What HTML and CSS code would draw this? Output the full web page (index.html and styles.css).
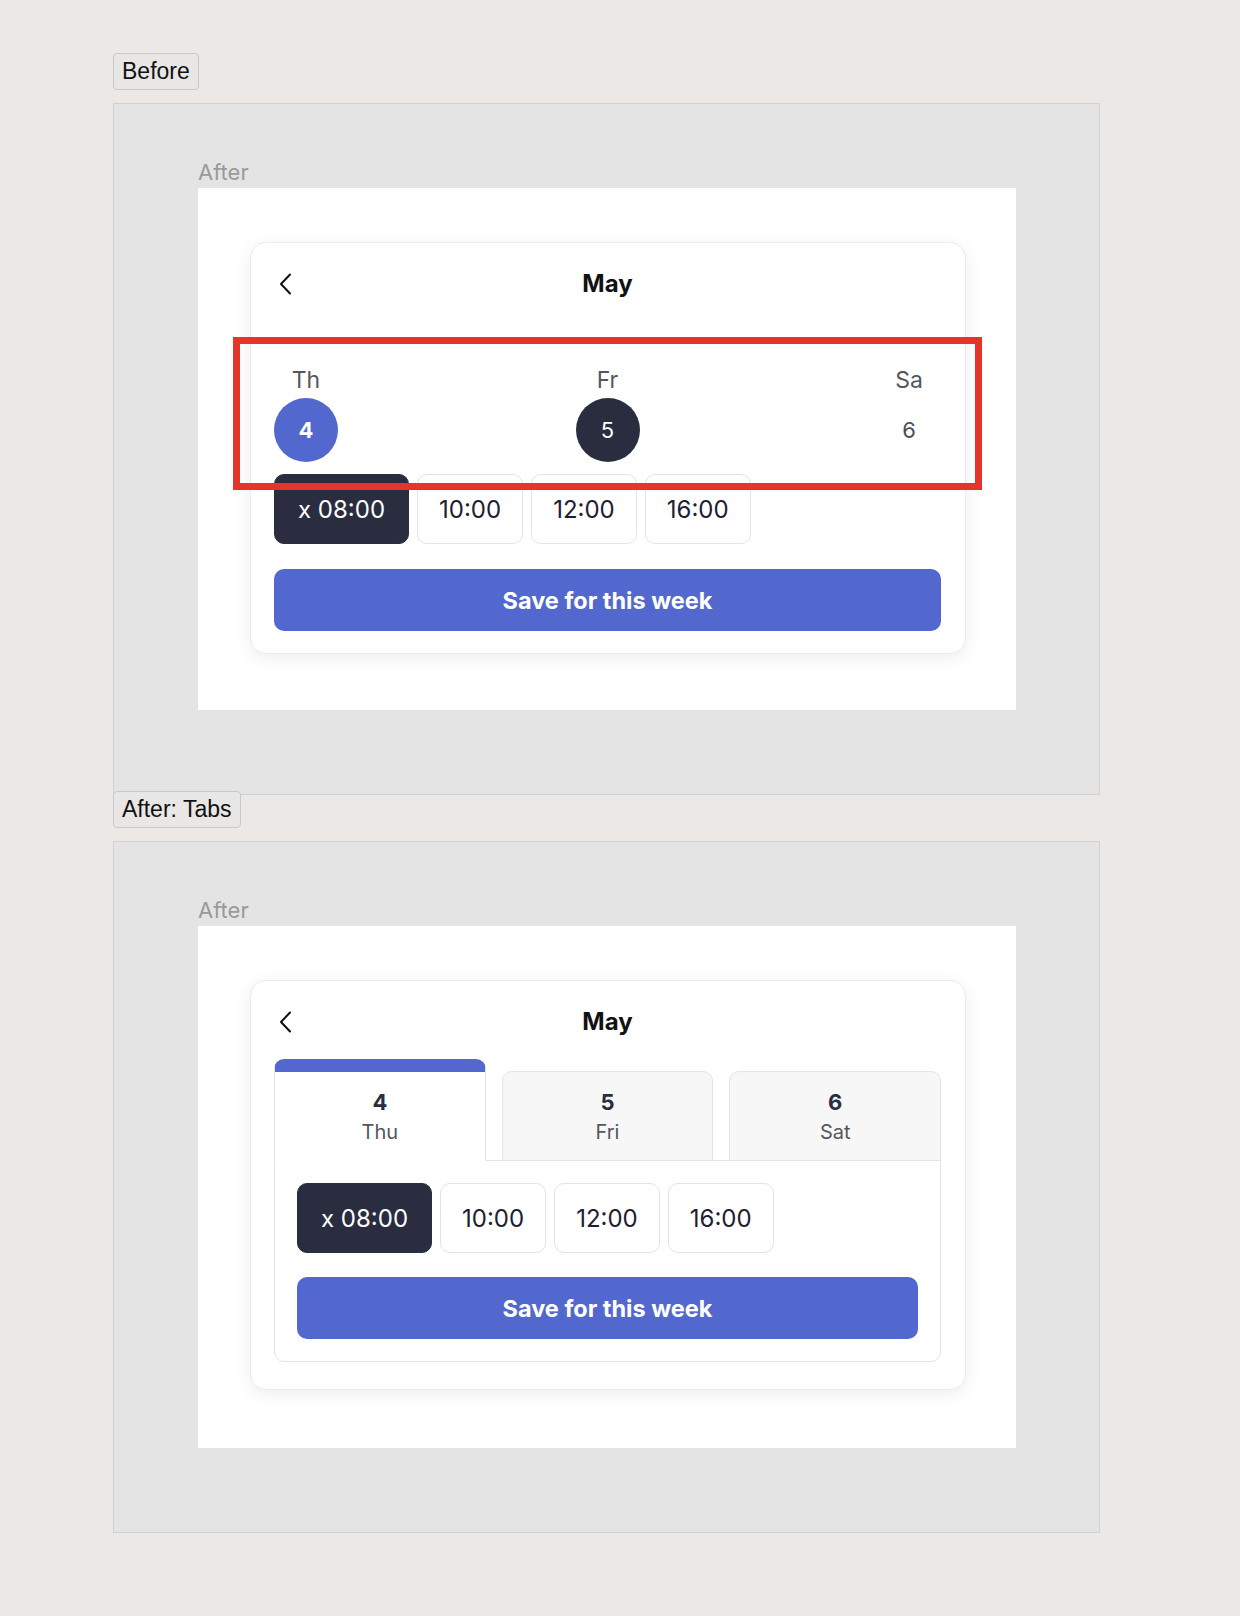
FILE: index.html
```html
<!DOCTYPE html>
<html lang="en">
<head>
<meta charset="utf-8">
<title>Day picker – Before / After</title>
<link rel="stylesheet" href="styles.css">
</head>
<body>
  <button class="variant-label">Before</button>
  <section class="variant">
    <div class="frame-label">After</div>
    <div class="stage">
      <div class="card">
        <div class="card-header">
          <button class="back" aria-label="Previous">
            <svg width="14" height="22" viewBox="0 0 14 22"><polyline points="11,1.5 2,11 11,20.5" fill="none" stroke="#111" stroke-width="2" stroke-linecap="round" stroke-linejoin="round"/></svg>
          </button>
          <h2 class="month">May</h2>
        </div>
        <div class="day-strip">
          <div class="day">
            <span class="day-name">Th</span>
            <span class="day-num is-today">4</span>
          </div>
          <div class="day">
            <span class="day-name">Fr</span>
            <span class="day-num is-selected">5</span>
          </div>
          <div class="day">
            <span class="day-name">Sa</span>
            <span class="day-num">6</span>
          </div>
          <div class="highlight"></div>
        </div>
        <div class="times">
          <button class="chip chip-active">x 08:00</button>
          <button class="chip">10:00</button>
          <button class="chip">12:00</button>
          <button class="chip">16:00</button>
        </div>
        <button class="save">Save for this week</button>
      </div>
    </div>
  </section>

  <button class="variant-label variant-label-second">After: Tabs</button>
  <section class="variant">
    <div class="frame-label">After</div>
    <div class="stage">
      <div class="card card-tabs">
        <div class="card-header">
          <button class="back" aria-label="Previous">
            <svg width="14" height="22" viewBox="0 0 14 22"><polyline points="11,1.5 2,11 11,20.5" fill="none" stroke="#111" stroke-width="2" stroke-linecap="round" stroke-linejoin="round"/></svg>
          </button>
          <h2 class="month">May</h2>
        </div>
        <div class="tabs">
          <div class="tab tab-active">
            <span class="tab-num">4</span>
            <span class="tab-name">Thu</span>
          </div>
          <div class="tab">
            <span class="tab-num">5</span>
            <span class="tab-name">Fri</span>
          </div>
          <div class="tab">
            <span class="tab-num">6</span>
            <span class="tab-name">Sat</span>
          </div>
        </div>
        <div class="tab-panel">
          <div class="times">
            <button class="chip chip-active">x 08:00</button>
            <button class="chip">10:00</button>
            <button class="chip">12:00</button>
            <button class="chip">16:00</button>
          </div>
          <button class="save">Save for this week</button>
        </div>
      </div>
    </div>
  </section>
</body>
</html>
```

FILE: styles.css
```css
* { box-sizing: border-box; }

body {
  margin: 0;
  padding: 53px 0 60px 113px;
  background: #ebe8e6;
  font-family: Inter, "Noto Sans", sans-serif;
  color: #23263a;
}

button {
  font-family: inherit;
  cursor: pointer;
}

.variant-label {
  display: block;
  height: 37px;
  margin: 0 0 13px;
  padding: 0 8px;
  font-family: "Liberation Sans", Arial, sans-serif;
  font-size: 23px;
  line-height: 35px;
  color: #111;
  background: #e9e7e5;
  border: 1px solid #c9c9c9;
  border-radius: 4px;
}

.variant-label-second {
  position: relative;
  margin-top: -4px;
}

.variant {
  width: 987px;
  padding: 54px 83px 84px 84px;
  background: #e4e4e4;
  border: 1px solid #d2d2d2;
}

.frame-label {
  font-size: 22px;
  line-height: 28px;
  color: #9a9a9a;
  margin-bottom: 2px;
}

.stage {
  height: 522px;
  padding: 54px 51px 0 52px;
  background: #fff;
}

.card {
  width: 716px;
  padding: 23px 24px 22px 23px;
  background: #fff;
  border: 1px solid #ebebeb;
  border-radius: 16px;
  box-shadow: 0 4px 18px rgba(0, 0, 0, 0.07);
}

.card-tabs {
  padding-bottom: 27px;
}

.card-header {
  position: relative;
  height: 36px;
  display: flex;
  align-items: center;
  justify-content: center;
}

.back {
  position: absolute;
  left: 5px;
  top: 7px;
  width: 14px;
  height: 22px;
  padding: 0;
  border: 0;
  background: none;
  display: flex;
}

.month {
  margin: 0;
  font-size: 24px;
  line-height: 36px;
  font-weight: 700;
  color: #111;
}

.day-strip {
  position: relative;
  margin-top: 64px;
  display: flex;
  justify-content: space-between;
}

.day {
  width: 64px;
  display: flex;
  flex-direction: column;
  align-items: center;
}

.day-name {
  font-size: 23px;
  line-height: 28px;
  color: #55575f;
}

.day-num {
  margin-top: 4px;
  width: 64px;
  height: 64px;
  border-radius: 50%;
  display: flex;
  align-items: center;
  justify-content: center;
  font-size: 22px;
  color: #4a4c55;
}

.day-num.is-today {
  background: #5368cf;
  color: #fff;
  font-weight: 700;
}

.day-num.is-selected {
  background: #292d3f;
  color: #fff;
}

.highlight {
  position: absolute;
  top: -29px;
  left: -41px;
  right: -41px;
  bottom: -28px;
  border: 7px solid #e5352b;
  pointer-events: none;
}

.times {
  margin-top: 12px;
  display: flex;
  gap: 8px;
}

.chip {
  height: 70px;
  padding: 0 21px;
  font-size: 24px;
  color: #1d2032;
  background: #fff;
  border: 1px solid #e4e4e4;
  border-radius: 10px;
}

.chip-active {
  padding: 0 23px;
  background: #292d3f;
  border-color: #292d3f;
  color: #fff;
}

.save {
  display: block;
  width: 100%;
  height: 62px;
  margin-top: 25px;
  font-size: 23.5px;
  font-weight: 700;
  color: #fff;
  background: #5368cf;
  border: 0;
  border-radius: 10px;
}

/* Tabs variant */
.tabs {
  position: relative;
  z-index: 1;
  margin-top: 19px;
  margin-bottom: -1px;
  display: flex;
  align-items: flex-end;
  gap: 16px;
}

.tab {
  flex: 1;
  display: flex;
  flex-direction: column;
  align-items: center;
  padding: 16px 0 12px;
  background: #f7f7f7;
  border: 1px solid #e4e4e4;
  border-radius: 10px 10px 0 0;
}

.tab-active {
  background: #fff;
  border-top: 13px solid #5368cf;
  border-bottom-color: #fff;
}

.tab-num {
  font-size: 22px;
  line-height: 28px;
  font-weight: 700;
  color: #292d3f;
}

.tab-name {
  font-size: 20px;
  line-height: 32px;
  color: #55575f;
}

.tab-panel {
  padding: 22px 22px 22px;
  border: 1px solid #e4e4e4;
  border-radius: 0 0 10px 10px;
}

.tab-panel .times {
  margin-top: 0;
}

.tab-panel .save {
  margin-top: 24px;
}
```
